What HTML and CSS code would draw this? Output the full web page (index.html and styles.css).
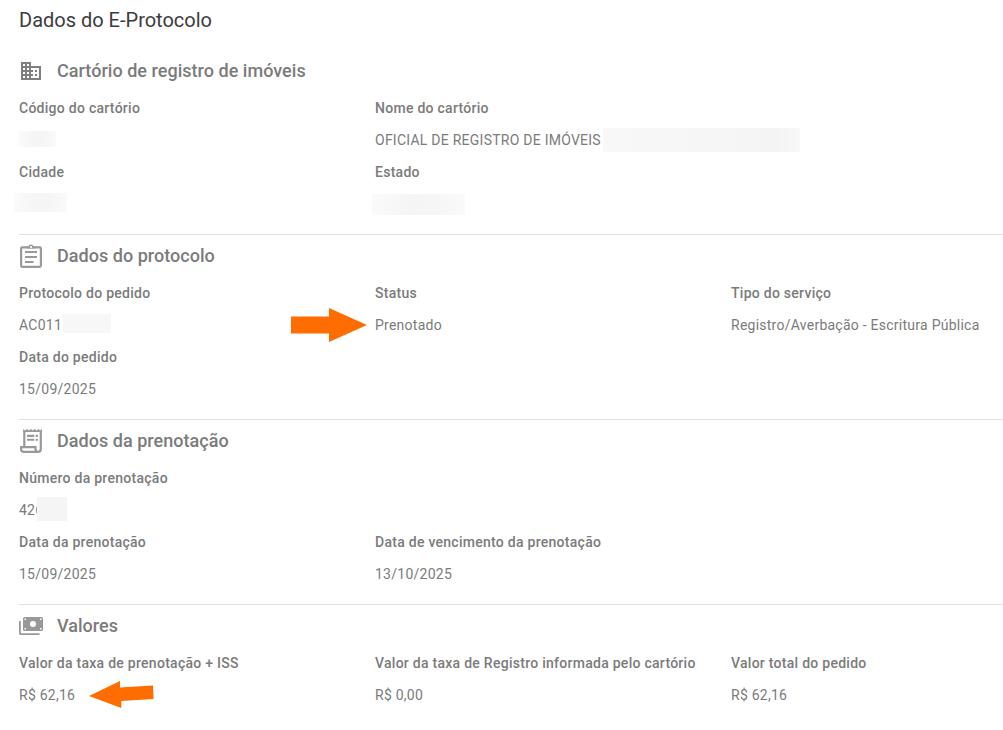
FILE: index.html
```html
<!DOCTYPE html>
<html lang="pt-BR">
<head>
  <meta charset="UTF-8">
  <meta name="viewport" content="width=device-width, initial-scale=1.0">
  <title>Dados do E-Protocolo</title>
  <link rel="stylesheet" href="styles.css">
</head>
<body>
  <main class="page">
    <h1 class="page-title">Dados do E-Protocolo</h1>

    <section class="section">
      <h2 class="section-title">
        <svg class="icon" viewBox="0 0 24 24"><path d="M12 7V3H2v18h20V7H12zM6 19H4v-2h2v2zm0-4H4v-2h2v2zm0-4H4V9h2v2zm0-4H4V5h2v2zm4 12H8v-2h2v2zm0-4H8v-2h2v2zm0-4H8V9h2v2zm0-4H8V5h2v2zm10 12h-8v-2h2v-2h-2v-2h2v-2h-2V9h8v10zm-2-8h-2v2h2v-2zm0 4h-2v2h2v-2z"/></svg>
        <span>Cartório de registro de imóveis</span>
      </h2>
      <dl class="grid">
        <div class="field">
          <dt>Código do cartório</dt>
          <dd><span class="mask mask-codigo"></span></dd>
        </div>
        <div class="field field-wide">
          <dt>Nome do cartório</dt>
          <dd>OFICIAL DE REGISTRO DE IMÓVEIS<span class="mask mask-nome"></span></dd>
        </div>
        <div class="field">
          <dt>Cidade</dt>
          <dd><span class="mask mask-cidade"></span></dd>
        </div>
        <div class="field">
          <dt>Estado</dt>
          <dd><span class="mask mask-estado"></span></dd>
        </div>
      </dl>
    </section>

    <section class="section">
      <h2 class="section-title">
        <svg class="icon icon-soft" viewBox="0 0 24 24">
          <rect class="line" x="2.1" y="3.4" width="19.8" height="19.4" rx="1.2"/>
          <path d="M8 4.500V2.400h1.400a2.700 2.700 0 0 1 5.200 0H16v2.100z"/>
          <circle class="hole" cx="12" cy="3" r="1.1"/>
          <path d="M6 6.900h12v2.200H6zM6 11.900h12v2.200H6zM6 16.900h8.500v2.200H6z"/>
        </svg>
        <span>Dados do protocolo</span>
      </h2>
      <dl class="grid">
        <div class="field">
          <dt>Protocolo do pedido</dt>
          <dd>AC011<span class="mask mask-protocolo"></span></dd>
        </div>
        <div class="field">
          <dt>Status</dt>
          <dd>
            Prenotado
            <svg class="arrow arrow-status" viewBox="0 0 76 34"><path d="M0 8.500h38V0l38 17-38 17v-8.500H0z"/></svg>
          </dd>
        </div>
        <div class="field">
          <dt>Tipo do serviço</dt>
          <dd>Registro/Averbação - Escritura Pública</dd>
        </div>
        <div class="field">
          <dt>Data do pedido</dt>
          <dd>15/09/2025</dd>
        </div>
      </dl>
    </section>

    <section class="section">
      <h2 class="section-title">
        <svg class="icon icon-soft" viewBox="0 0 24 24">
          <path class="line" d="M5.300 18V2M21.800 2v18a2.800 2.800 0 0 1-2.800 2.800H4.500A2.500 2.500 0 0 1 2.100 20.300V18.200h14.400v2.100a2.500 2.500 0 0 0 2.500 2.500"/>
          <path d="M4.200 0l1.900 1.500L8 0l1.900 1.500L11.800 0l1.900 1.500L15.600 0l1.900 1.500L19.400 0l1.700 1.500L23 0v3H4.200z"/>
          <path d="M8 5.800h7.300v2.100H8zM16.700 5.800h2.200v2.100h-2.200zM8 9.700h7.300v2.100H8zM16.700 9.700h2.200v2.100h-2.200z"/>
        </svg>
        <span>Dados da prenotação</span>
      </h2>
      <dl class="grid">
        <div class="field field-full">
          <dt>Número da prenotação</dt>
          <dd>426<span class="mask mask-numero"></span></dd>
        </div>
        <div class="field">
          <dt>Data da prenotação</dt>
          <dd>15/09/2025</dd>
        </div>
        <div class="field">
          <dt>Data de vencimento da prenotação</dt>
          <dd>13/10/2025</dd>
        </div>
      </dl>
    </section>

    <section class="section">
      <h2 class="section-title">
        <svg class="icon icon-soft" viewBox="0 0 24 24">
          <path class="line line-thin" d="M.9 7v12.200a1 1 0 0 0 1 1H20.500"/>
          <rect x="4" y="3" width="20" height="14" rx="1.500"/>
          <circle class="hole" cx="14" cy="10" r="3"/>
          <path class="hole" d="M5.500 4.600h1.500v1.500H5.500zM21 4.600h1.500v1.500H21zM5.500 13.900h1.500v1.500H5.500zM21 13.900h1.500v1.500H21z"/>
        </svg>
        <span>Valores</span>
      </h2>
      <dl class="grid">
        <div class="field">
          <dt>Valor da taxa de prenotação + ISS</dt>
          <dd>
            R$ 62,16
            <svg class="arrow arrow-valor" viewBox="0 0 65 28"><path d="M0 15L31 0v6.500l33-2 .6 13.500-32.300 2v7z"/></svg>
          </dd>
        </div>
        <div class="field">
          <dt>Valor da taxa de Registro informada pelo cartório</dt>
          <dd>R$ 0,00</dd>
        </div>
        <div class="field">
          <dt>Valor total do pedido</dt>
          <dd>R$ 62,16</dd>
        </div>
      </dl>
    </section>
  </main>
</body>
</html>
```
FILE: styles.css
```css
* {
  margin: 0;
  padding: 0;
  box-sizing: border-box;
}

body {
  background: #fff;
  color: #7b7b7b;
  font-family: Roboto, "Liberation Sans", sans-serif;
  font-size: 14px;
  letter-spacing: 0.25px;
}

.page {
  padding-left: 19px;
}

.page-title {
  height: 49px;
  color: #3c3c3c;
  font-size: 20px;
  font-weight: 400;
  letter-spacing: 0;
  line-height: 40px;
}

.section {
  padding-bottom: 14px;
  border-top: 1px solid #e0e0e0;
}

.section:last-child {
  padding-bottom: 0;
}

.page-title + .section {
  border-top-color: transparent;
}

.section-title {
  display: flex;
  align-items: center;
  gap: 14px;
  height: 42px;
  font-size: 18px;
  font-weight: 500;
  letter-spacing: 0.03px;
}

.section-title span {
  padding-bottom: 2px;
}

.icon {
  width: 24px;
  height: 24px;
  fill: #808080;
}

.icon-soft {
  fill: #999;
}

.line {
  fill: none;
  stroke: #999;
  stroke-width: 2.2;
}

.line-thin {
  stroke-width: 1.8;
}

.hole {
  fill: #fff;
}

.grid {
  display: grid;
  grid-template-columns: 356px 356px 1fr;
}

.field-wide {
  grid-column: span 2;
}

.field-full {
  grid-column: 1 / -1;
}

dt,
dd {
  position: relative;
  height: 32px;
  line-height: 32px;
  white-space: nowrap;
}

dt {
  font-weight: 500;
  letter-spacing: 0.27px;
}

/* faixas que cobrem os dados pessoais */
.mask {
  position: absolute;
  background: linear-gradient(90deg, #fafafa, #f5f5f5 45%, #f6f6f6 70%, #fafafa);
}

.mask-codigo {
  left: 0;
  top: 7px;
  width: 37px;
  height: 16px;
}

.mask-nome {
  left: 228px;
  top: 4px;
  width: 197px;
  height: 24px;
  background: linear-gradient(90deg, #f8f8f8, #f6f6f6 60%, #f4f4f4 88%, #f8f8f8);
}

.mask-cidade {
  left: -5px;
  top: 5px;
  width: 53px;
  height: 19px;
}

.mask-estado {
  left: -3px;
  top: 6px;
  width: 93px;
  height: 21px;
}

.mask-protocolo {
  left: 44px;
  top: 5px;
  width: 48px;
  height: 19px;
  background: #f7f7f7;
}

.mask-numero {
  left: 18px;
  top: 3px;
  width: 30px;
  height: 24px;
  background: #f5f5f5;
}

/* setas de destaque */
.arrow {
  position: absolute;
  fill: #ff6d00;
}

.arrow-status {
  left: -84px;
  top: -1px;
  width: 76px;
  height: 34px;
}

.arrow-valor {
  left: 70px;
  top: 2px;
  width: 65px;
  height: 28px;
}
```
